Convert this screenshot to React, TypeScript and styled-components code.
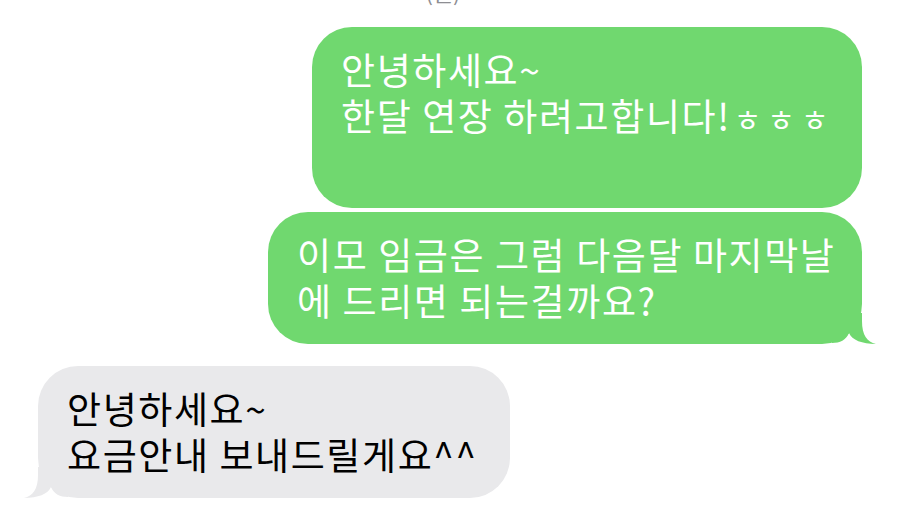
import styled, { createGlobalStyle } from "styled-components";

const GlobalStyle = createGlobalStyle`
  html, body {
    margin: 0;
    padding: 0;
    background: #ffffff;
  }
  body {
    font-family: "Noto Sans CJK KR", "Noto Sans", sans-serif;
    -webkit-font-smoothing: antialiased;
  }
`;

const Page = styled.div`
  width: 900px;
  height: 512px;
  overflow: hidden;
  box-sizing: border-box;
  padding: 0 38px;
  display: flex;
  flex-direction: column;
`;

const Stamp = styled.div`
  margin-top: -21px;
  padding-right: 14px;
  text-align: center;
  font-size: 22px;
  line-height: 24px;
  color: #8e8e93;
`;

const Thread = styled.div`
  margin-top: 24px;
  display: flex;
  flex-direction: column;
`;

const Row = styled.div<{ $mine: boolean; $gap: number }>`
  display: flex;
  justify-content: ${(p) => (p.$mine ? "flex-end" : "flex-start")};
  margin-top: ${(p) => p.$gap}px;
`;

const Bubble = styled.div<{ $mine: boolean; $width: number }>`
  position: relative;
  box-sizing: border-box;
  width: ${(p) => p.$width}px;
  padding: 19px 14px 21px 29px;
  border-radius: 40px;
  background: ${(p) => (p.$mine ? "#70d86f" : "#e9e9eb")};
  color: ${(p) => (p.$mine ? "#ffffff" : "#000000")};
  font-size: 37px;
  line-height: 46px;
  letter-spacing: 1.6px;
  white-space: pre-line;
`;

const Small = styled.span`
  font-size: 30px;
  letter-spacing: 6px;
  margin-left: 3px;
`;

const Tail = styled.svg<{ $mine: boolean }>`
  position: absolute;
  bottom: -1px;
  width: 45px;
  height: 32px;
  ${(p) =>
    p.$mine
      ? "right: -15px;"
      : "left: -15px; transform: scaleX(-1);"}
`;

function BubbleTail({ mine, color }: { mine: boolean; color: string }) {
  return (
    <Tail $mine={mine} viewBox="0 0 45 32">
      <path
        d="M0 30 C8 30 14 27 17 20 C20 27 30 31 44 31 C35 29 30 22 30 8 L30 0 L0 0 Z"
        fill={color}
      />
    </Tail>
  );
}

interface IMessage {
  id: number;
  mine: boolean;
  width: number;
  gap: number;
  tail: boolean;
  text: React.ReactNode;
}

const messages: IMessage[] = [
  {
    id: 1,
    mine: true,
    width: 550,
    gap: 0,
    tail: false,
    text: (
      <>
        {"안녕하세요~\n한달 연장 하려고합니다!"}
        <Small>ㅎㅎㅎ</Small>
        {"\n\u00a0"}
      </>
    ),
  },
  {
    id: 2,
    mine: true,
    width: 594,
    gap: 4,
    tail: true,
    text: "이모 임금은 그럼 다음달 마지막날\n에 드리면 되는걸까요?",
  },
  {
    id: 3,
    mine: false,
    width: 472,
    gap: 22,
    tail: true,
    text: "안녕하세요~\n요금안내 보내드릴게요^^",
  },
];

export default function App() {
  return (
    <>
      <GlobalStyle />
      <Page>
        <Stamp>(월)</Stamp>
        <Thread>
          {messages.map((m) => (
            <Row key={m.id} $mine={m.mine} $gap={m.gap}>
              <Bubble $mine={m.mine} $width={m.width}>
                {m.text}
                {m.tail && (
                  <BubbleTail
                    mine={m.mine}
                    color={m.mine ? "#70d86f" : "#e9e9eb"}
                  />
                )}
              </Bubble>
            </Row>
          ))}
        </Thread>
      </Page>
    </>
  );
}
